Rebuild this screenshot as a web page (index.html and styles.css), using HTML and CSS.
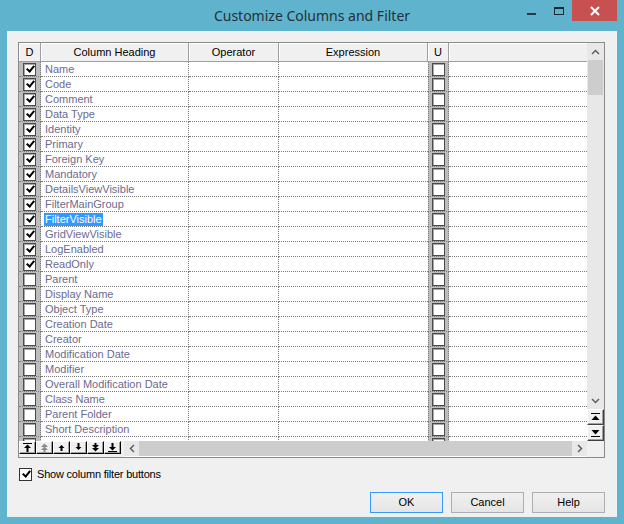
FILE: index.html
```html
<!DOCTYPE html>
<html>
<head>
<meta charset="utf-8">
<link rel="stylesheet" href="styles.css">
</head>
<body>
<div class="window">
  <div class="titlebar">
    <span></span>
    <div class="title">Customize Columns and Filter</div>
    <div class="controls">
      <div class="ctl"><span class="min"></span></div>
      <div class="ctl"><span class="max"></span></div>
      <div class="ctl close"><svg width="10" height="10" viewBox="0 0 10 10"><path d="M1 1 L9 9 M9 1 L1 9" stroke="#fff" stroke-width="2"/></svg></div>
    </div>
  </div>
  <div class="client">
    <div class="grid">
      <div class="grid-main">
        <div class="table">
          <div class="hdr">
            <div class="hc c-d">D</div>
            <div class="hc c-h">Column Heading</div>
            <div class="hc c-o">Operator</div>
            <div class="hc c-e">Expression</div>
            <div class="hc c-u">U</div>
            <div class="hc c-r"></div>
          </div>
          <div class="rows">
            <div class="row"><div class="c-d cell-d"><span class="cb on"></span></div><div class="c-h cell-h">Name</div><div class="c-o cell"></div><div class="c-e cell"></div><div class="c-u cell-u"><span class="cb"></span></div><div class="c-r cell"></div></div>
            <div class="row"><div class="c-d cell-d"><span class="cb on"></span></div><div class="c-h cell-h">Code</div><div class="c-o cell"></div><div class="c-e cell"></div><div class="c-u cell-u"><span class="cb"></span></div><div class="c-r cell"></div></div>
            <div class="row"><div class="c-d cell-d"><span class="cb on"></span></div><div class="c-h cell-h">Comment</div><div class="c-o cell"></div><div class="c-e cell"></div><div class="c-u cell-u"><span class="cb"></span></div><div class="c-r cell"></div></div>
            <div class="row"><div class="c-d cell-d"><span class="cb on"></span></div><div class="c-h cell-h">Data Type</div><div class="c-o cell"></div><div class="c-e cell"></div><div class="c-u cell-u"><span class="cb"></span></div><div class="c-r cell"></div></div>
            <div class="row"><div class="c-d cell-d"><span class="cb on"></span></div><div class="c-h cell-h">Identity</div><div class="c-o cell"></div><div class="c-e cell"></div><div class="c-u cell-u"><span class="cb"></span></div><div class="c-r cell"></div></div>
            <div class="row"><div class="c-d cell-d"><span class="cb on"></span></div><div class="c-h cell-h">Primary</div><div class="c-o cell"></div><div class="c-e cell"></div><div class="c-u cell-u"><span class="cb"></span></div><div class="c-r cell"></div></div>
            <div class="row"><div class="c-d cell-d"><span class="cb on"></span></div><div class="c-h cell-h">Foreign Key</div><div class="c-o cell"></div><div class="c-e cell"></div><div class="c-u cell-u"><span class="cb"></span></div><div class="c-r cell"></div></div>
            <div class="row"><div class="c-d cell-d"><span class="cb on"></span></div><div class="c-h cell-h">Mandatory</div><div class="c-o cell"></div><div class="c-e cell"></div><div class="c-u cell-u"><span class="cb"></span></div><div class="c-r cell"></div></div>
            <div class="row"><div class="c-d cell-d"><span class="cb on"></span></div><div class="c-h cell-h">DetailsViewVisible</div><div class="c-o cell"></div><div class="c-e cell"></div><div class="c-u cell-u"><span class="cb"></span></div><div class="c-r cell"></div></div>
            <div class="row"><div class="c-d cell-d"><span class="cb on"></span></div><div class="c-h cell-h">FilterMainGroup</div><div class="c-o cell"></div><div class="c-e cell"></div><div class="c-u cell-u"><span class="cb"></span></div><div class="c-r cell"></div></div>
            <div class="row"><div class="c-d cell-d"><span class="cb on"></span></div><div class="c-h cell-h"><span class="sel">FilterVisible</span></div><div class="c-o cell"></div><div class="c-e cell"></div><div class="c-u cell-u"><span class="cb"></span></div><div class="c-r cell"></div></div>
            <div class="row"><div class="c-d cell-d"><span class="cb on"></span></div><div class="c-h cell-h">GridViewVisible</div><div class="c-o cell"></div><div class="c-e cell"></div><div class="c-u cell-u"><span class="cb"></span></div><div class="c-r cell"></div></div>
            <div class="row"><div class="c-d cell-d"><span class="cb on"></span></div><div class="c-h cell-h">LogEnabled</div><div class="c-o cell"></div><div class="c-e cell"></div><div class="c-u cell-u"><span class="cb"></span></div><div class="c-r cell"></div></div>
            <div class="row"><div class="c-d cell-d"><span class="cb on"></span></div><div class="c-h cell-h">ReadOnly</div><div class="c-o cell"></div><div class="c-e cell"></div><div class="c-u cell-u"><span class="cb"></span></div><div class="c-r cell"></div></div>
            <div class="row"><div class="c-d cell-d"><span class="cb"></span></div><div class="c-h cell-h">Parent</div><div class="c-o cell"></div><div class="c-e cell"></div><div class="c-u cell-u"><span class="cb"></span></div><div class="c-r cell"></div></div>
            <div class="row"><div class="c-d cell-d"><span class="cb"></span></div><div class="c-h cell-h">Display Name</div><div class="c-o cell"></div><div class="c-e cell"></div><div class="c-u cell-u"><span class="cb"></span></div><div class="c-r cell"></div></div>
            <div class="row"><div class="c-d cell-d"><span class="cb"></span></div><div class="c-h cell-h">Object Type</div><div class="c-o cell"></div><div class="c-e cell"></div><div class="c-u cell-u"><span class="cb"></span></div><div class="c-r cell"></div></div>
            <div class="row"><div class="c-d cell-d"><span class="cb"></span></div><div class="c-h cell-h">Creation Date</div><div class="c-o cell"></div><div class="c-e cell"></div><div class="c-u cell-u"><span class="cb"></span></div><div class="c-r cell"></div></div>
            <div class="row"><div class="c-d cell-d"><span class="cb"></span></div><div class="c-h cell-h">Creator</div><div class="c-o cell"></div><div class="c-e cell"></div><div class="c-u cell-u"><span class="cb"></span></div><div class="c-r cell"></div></div>
            <div class="row"><div class="c-d cell-d"><span class="cb"></span></div><div class="c-h cell-h">Modification Date</div><div class="c-o cell"></div><div class="c-e cell"></div><div class="c-u cell-u"><span class="cb"></span></div><div class="c-r cell"></div></div>
            <div class="row"><div class="c-d cell-d"><span class="cb"></span></div><div class="c-h cell-h">Modifier</div><div class="c-o cell"></div><div class="c-e cell"></div><div class="c-u cell-u"><span class="cb"></span></div><div class="c-r cell"></div></div>
            <div class="row"><div class="c-d cell-d"><span class="cb"></span></div><div class="c-h cell-h">Overall Modification Date</div><div class="c-o cell"></div><div class="c-e cell"></div><div class="c-u cell-u"><span class="cb"></span></div><div class="c-r cell"></div></div>
            <div class="row"><div class="c-d cell-d"><span class="cb"></span></div><div class="c-h cell-h">Class Name</div><div class="c-o cell"></div><div class="c-e cell"></div><div class="c-u cell-u"><span class="cb"></span></div><div class="c-r cell"></div></div>
            <div class="row"><div class="c-d cell-d"><span class="cb"></span></div><div class="c-h cell-h">Parent Folder</div><div class="c-o cell"></div><div class="c-e cell"></div><div class="c-u cell-u"><span class="cb"></span></div><div class="c-r cell"></div></div>
            <div class="row"><div class="c-d cell-d"><span class="cb"></span></div><div class="c-h cell-h">Short Description</div><div class="c-o cell"></div><div class="c-e cell"></div><div class="c-u cell-u"><span class="cb"></span></div><div class="c-r cell"></div></div>
            <div class="row"><div class="c-d cell-d"><span class="cb"></span></div><div class="c-h cell-h"></div><div class="c-o cell"></div><div class="c-e cell"></div><div class="c-u cell-u"><span class="cb"></span></div><div class="c-r cell"></div></div>
          </div>
        </div>
        <div class="vscroll">
          <div class="sb-btn"><svg width="9" height="6" viewBox="0 0 9 6"><path d="M1 5 L4.5 1.5 L8 5" fill="none" stroke="#606060" stroke-width="1.5"/></svg></div>
          <div class="vthumb"></div>
          <div class="vtrack"></div>
          <div class="sb-btn"><svg width="9" height="6" viewBox="0 0 9 6"><path d="M1 1 L4.5 4.5 L8 1" fill="none" stroke="#606060" stroke-width="1.5"/></svg></div>
          <div class="jump"><svg width="9" height="8" viewBox="0 0 9 8"><rect x="0" y="0" width="9" height="1" fill="#000"/><path d="M0.5 7 L4.5 2.5 L8.5 7 Z" fill="#000"/></svg></div>
          <div class="jump"><svg width="9" height="8" viewBox="0 0 9 8"><path d="M0.5 1 L4.5 5.5 L8.5 1 Z" fill="#000"/><rect x="0" y="7" width="9" height="1" fill="#000"/></svg></div>
        </div>
      </div>
      <div class="grid-bottom">
        <div class="toolbar">
          <div class="tb"><svg width="9" height="9" viewBox="0 0 9 9"><rect x="0" y="0" width="9" height="1"/><path d="M1 5 L4.5 1.5 L8 5 Z"/><rect x="3.5" y="5" width="2" height="4"/></svg></div>
          <div class="tb dis"><svg width="9" height="9" viewBox="0 0 9 9"><path d="M1 4 L4.5 0.5 L8 4 Z"/><path d="M1 7 L4.5 3.5 L8 7 Z"/><rect x="3.5" y="7" width="2" height="2"/></svg></div>
          <div class="tb"><svg width="9" height="9" viewBox="0 0 9 9"><path d="M1.5 5 L4.5 2 L7.5 5 Z"/><rect x="3.5" y="5" width="2" height="3"/></svg></div>
          <div class="tb"><svg width="9" height="9" viewBox="0 0 9 9"><rect x="3.5" y="0" width="2" height="4"/><path d="M1.5 4 L4.5 7 L7.5 4 Z"/></svg></div>
          <div class="tb"><svg width="9" height="9" viewBox="0 0 9 9"><rect x="3.5" y="0" width="2" height="2"/><path d="M1 2 L4.5 5.5 L8 2 Z"/><path d="M1 5 L4.5 8.5 L8 5 Z"/></svg></div>
          <div class="tb"><svg width="9" height="9" viewBox="0 0 9 9"><rect x="3.5" y="0" width="2" height="4"/><path d="M1 4 L4.5 7.5 L8 4 Z"/><rect x="0" y="8" width="9" height="1"/></svg></div>
        </div>
        <div class="hscroll">
          <div class="hs-btn"><svg width="6" height="9" viewBox="0 0 6 9"><path d="M5 1 L1.5 4.5 L5 8" fill="none" stroke="#606060" stroke-width="1.5"/></svg></div>
          <div class="hthumb"></div>
          <div class="hs-btn"><svg width="6" height="9" viewBox="0 0 6 9"><path d="M1 1 L4.5 4.5 L1 8" fill="none" stroke="#606060" stroke-width="1.5"/></svg></div>
        </div>
        <div class="corner"></div>
      </div>
    </div>
    <label class="showfilter"><span class="cb2"></span>Show column filter buttons</label>
    <div class="buttons">
      <div class="btn default">OK</div>
      <div class="btn">Cancel</div>
      <div class="btn">Help</div>
    </div>
  </div>
</div>
</body>
</html>
```
FILE: styles.css
```css
* { box-sizing: border-box; margin: 0; padding: 0; }
html, body { width: 624px; height: 524px; overflow: hidden; }
body { background: #5fb3cd; font-family: "Liberation Sans", Arial, sans-serif; font-size: 11px; color: #000; }
.window { display: flex; flex-direction: column; height: 524px; padding: 0 7px 7px; }
.titlebar { height: 31px; display: grid; grid-template-columns: 1fr auto 1fr; }
.title { font-family: "Noto Sans", "Open Sans", sans-serif; font-size: 14px; line-height: 31px; color: #263038; }
.controls { display: flex; justify-content: flex-end; align-items: flex-start; }
.ctl { width: 27px; height: 21px; display: flex; align-items: center; justify-content: center; }
.ctl .min { width: 9px; height: 2px; background: #2a3a44; margin-top: 6px; }
.ctl .max { width: 10px; height: 8px; border: 1px solid #1e2a30; border-top-width: 2px; }
.ctl.close { width: 45px; background: #c75050; }
.client { flex: 1; background: #f0f0f0; padding: 11px 12px 4px 11px; display: flex; flex-direction: column; }
.grid { height: 416px; border: 1px solid #8a8a8a; display: flex; flex-direction: column; background: #fff; }
.grid-main { display: flex; height: 398px; }
.table { flex: 1; overflow: hidden; display: flex; flex-direction: column; }
.hdr { display: flex; height: 19px; flex: none; background: #f0f0f0; border-bottom: 1px solid #a0a0a0; }
.hc { height: 18px; line-height: 19px; text-align: center; border-right: 1px solid #a0a0a0; box-shadow: inset 1px 1px #fff; color: #000; }
.c-d { width: 22px; flex: none; }
.c-h { width: 148px; flex: none; }
.c-o { width: 90px; flex: none; }
.c-e { width: 149px; flex: none; }
.c-u { width: 21px; flex: none; }
.c-r { flex: 1; }
.hc.c-r { border-right: none; }
.rows { flex: 1; overflow: hidden; }
.row { display: flex; height: 15px; }
.row > div { height: 15px; border-bottom: 1px dotted #7a7a7a; }
.cell-d { background: #bdbdbd; border-right: 1px dotted #7a7a7a; padding: 0 0 0 4px; display: flex; align-items: center; }
.cell-h { border-right: 1px dotted #7a7a7a; padding-left: 4px; line-height: 14px; color: #6b6b8e; white-space: nowrap; overflow: hidden; }
.cell { border-right: 1px dotted #7a7a7a; }
.c-e.cell { border-right: none; }
.c-r.cell { border-right: none; }
.cell-u { background: #bdbdbd; border-left: 1px dotted #7a7a7a; border-right: 1px dotted #7a7a7a; padding-left: 3px; display: flex; align-items: center; }
.sel { background: #3399ff; color: #fff; padding: 0 1px; margin-left: -1px; display: inline-block; line-height: 13px; }
.cb { width: 13px; height: 13px; background: #fff; border: 1px solid #4a4a4a; box-shadow: inset 1px 1px #a8a8a8; position: relative; display: block; flex: none; }
.cb.on::after { content: ""; position: absolute; width: 3px; height: 6px; border: solid #000; border-width: 0 2px 2px 0; transform: rotate(40deg); left: 3.5px; top: 0.5px; }
.vscroll { width: 17px; flex: none; display: flex; flex-direction: column; background: #e8e8e8; }
.sb-btn { height: 17px; flex: none; display: flex; align-items: center; justify-content: center; }
.vthumb { height: 35px; margin: 0 1px 0 1px; background: #cdcdcd; flex: none; }
.vtrack { flex: 1; }
.jump { height: 16px; flex: none; background: #f0f0f0; border: 1px solid; border-color: #fff #404040 #404040 #fff; box-shadow: inset -1px -1px #a0a0a0; display: flex; align-items: center; justify-content: center; }
.grid-bottom { display: flex; height: 16px; flex: none; }
.toolbar { display: flex; width: 105px; flex: none; background: #f0f0f0; align-items: flex-start; }
.tb { width: 17px; height: 13px; border: 1px solid; border-color: #fff #000 #000 #fff; box-shadow: inset -1px -1px #a0a0a0; background: #f0f0f0; display: flex; align-items: center; justify-content: center; }
.tb svg { fill: #000; }
.tb.dis svg { fill: #8a8a8a; }
.hscroll { flex: 1; display: flex; background: #e8e8e8; height: 15px; }
.hs-btn { width: 15px; display: flex; align-items: center; justify-content: center; }
.hthumb { flex: 1; background: #cdcdcd; }
.corner { width: 17px; flex: none; background: #f0f0f0; }
.showfilter { display: flex; align-items: center; height: 14px; margin-top: 9px; margin-left: 1px; font-size: 11px; letter-spacing: -0.2px; }
.cb2 { width: 13px; height: 13px; border: 1px solid #333; background: #fff; margin-right: 5px; position: relative; }
.cb2::after { content: ""; position: absolute; left: 3.5px; top: 0.5px; width: 3px; height: 6px; border: solid #000; border-width: 0 2px 2px 0; transform: rotate(40deg); }
.buttons { display: flex; justify-content: flex-end; gap: 8px; margin-top: 11px; }
.btn { width: 73px; height: 21px; border: 1px solid #adadad; background: linear-gradient(#f0f0f0, #e5e5e5); text-align: center; line-height: 19px; font-size: 11px; }
.btn.default { border-color: #3399ff; }
```
